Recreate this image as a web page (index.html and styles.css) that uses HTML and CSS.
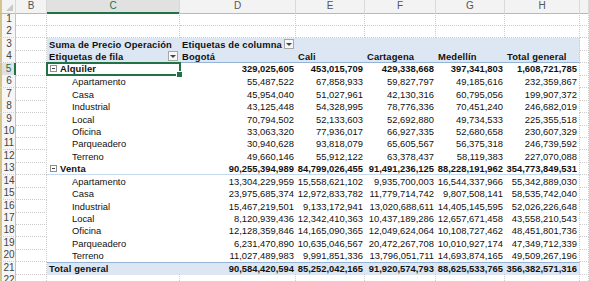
FILE: index.html
```html
<!DOCTYPE html>
<html lang="es">
<head>
    <meta charset="UTF-8">
    <title>Tabla dinámica - Precio Operación</title>
    <link rel="stylesheet" href="styles.css">
</head>
<body>
    <div class="sheet" id="sheet"></div>

    <script>
        // Pivot data: Suma de Precio Operación by tipo / ciudad
        const cities = ['Bogotá', 'Cali', 'Cartagena', 'Medellín', 'Total general'];
        const rows = [
            { kind: 'group', label: 'Alquiler', vals: ['329,025,605', '453,015,709', '429,338,668', '397,341,803', '1,608,721,785'] },
            { kind: 'item', label: 'Apartamento', vals: ['55,487,522', '67,858,933', '59,827,797', '49,185,616', '232,359,867'] },
            { kind: 'item', label: 'Casa', vals: ['45,954,040', '51,027,961', '42,130,316', '60,795,056', '199,907,372'] },
            { kind: 'item', label: 'Industrial', vals: ['43,125,448', '54,328,995', '78,776,336', '70,451,240', '246,682,019'] },
            { kind: 'item', label: 'Local', vals: ['70,794,502', '52,133,603', '52,692,880', '49,734,533', '225,355,518'] },
            { kind: 'item', label: 'Oficina', vals: ['33,063,320', '77,936,017', '66,927,335', '52,680,658', '230,607,329'] },
            { kind: 'item', label: 'Parqueadero', vals: ['30,940,628', '93,818,079', '65,605,567', '56,375,318', '246,739,592'] },
            { kind: 'item', label: 'Terreno', vals: ['49,660,146', '55,912,122', '63,378,437', '58,119,383', '227,070,088'] },
            { kind: 'group', label: 'Venta', vals: ['90,255,394,989', '84,799,026,455', '91,491,236,125', '88,228,191,962', '354,773,849,531'] },
            { kind: 'item', label: 'Apartamento', vals: ['13,304,229,959', '15,558,621,102', '9,935,700,003', '16,544,337,966', '55,342,889,030'] },
            { kind: 'item', label: 'Casa', vals: ['23,975,685,374', '12,972,833,782', '11,779,714,742', '9,807,508,141', '58,535,742,040'] },
            { kind: 'item', label: 'Industrial', vals: ['15,467,219,501', '9,133,172,941', '13,020,688,611', '14,405,145,595', '52,026,226,648'] },
            { kind: 'item', label: 'Local', vals: ['8,120,939,436', '12,342,410,363', '10,437,189,286', '12,657,671,458', '43,558,210,543'] },
            { kind: 'item', label: 'Oficina', vals: ['12,128,359,846', '14,165,090,365', '12,049,624,064', '10,108,727,462', '48,451,801,736'] },
            { kind: 'item', label: 'Parqueadero', vals: ['6,231,470,890', '10,635,046,567', '20,472,267,708', '10,010,927,174', '47,349,712,339'] },
            { kind: 'item', label: 'Terreno', vals: ['11,027,489,983', '9,991,851,336', '13,796,051,711', '14,693,874,165', '49,509,267,196'] },
            { kind: 'total', label: 'Total general', vals: ['90,584,420,594', '85,252,042,165', '91,920,574,793', '88,625,533,765', '356,382,571,316'] }
        ];

        const sheet = document.getElementById('sheet');
        const dropdown = '<span class="dd"></span>';

        function line(num, cells, cls = '') {
            const numCls = num === 5 ? 'num active' : 'num';
            return `<div class="row ${cls}"><div class="${numCls}">${num}</div><div class="c grid"></div>${cells}<div class="c grid"></div></div>`;
        }

        function emptyCells() {
            return '<div class="c grid"></div>'.repeat(6);
        }

        let html = '';

        // Column letters
        html += '<div class="row heads"><div class="corner"></div>';
        ['B', 'C', 'D', 'E', 'F', 'G', 'H', ''].forEach(l => {
            html += `<div class="head${l === 'C' ? ' active' : ''}">${l}</div>`;
        });
        html += '</div>';

        html += line(1, emptyCells());
        html += line(2, emptyCells());

        // Pivot header rows
        html += line(3,
            '<div class="c pv lbl b">Suma de Precio Operación</div>' +
            `<div class="c pv lbl b split">Etiquetas de columna${dropdown}</div>` +
            '<div class="c pv"></div>'.repeat(3) + '<div class="c pv last"></div>',
            'hd');

        html += line(4,
            `<div class="c pv lbl b split">Etiquetas de fila${dropdown}</div>` +
            cities.map((c, i) => `<div class="c pv lbl b${i === 4 ? ' last' : ''}">${c}</div>`).join(''),
            'hd hd-end');

        rows.forEach((r, idx) => {
            const num = idx + 5;
            let label;
            if (r.kind === 'group') {
                label = `<div class="c pv lbl b group-lbl${num === 5 ? ' sel' : ''}"><span class="tog"></span>${r.label}</div>`;
            } else if (r.kind === 'item') {
                label = `<div class="c pv lbl item">${r.label}</div>`;
            } else {
                label = `<div class="c pv lbl b">${r.label}</div>`;
            }
            const vals = r.vals.map((v, i) => `<div class="c pv n${i === 4 ? ' last' : ''}">${v}</div>`).join('');
            html += line(num, label + vals, r.kind === 'item' ? '' : r.kind);
        });

        html += line(22, emptyCells());

        sheet.innerHTML = html;
    </script>
</body>
</html>
```

FILE: styles.css
```css
* {
    margin: 0;
    padding: 0;
    box-sizing: border-box;
}

body {
    background: #ffffff;
    font-family: "Liberation Sans", Arial, sans-serif;
    color: #000000;
}

.sheet {
    width: 589px;
    height: 281px;
    overflow: hidden;
}

.row {
    display: grid;
    grid-template-columns: 16px 31px 133px 116px 69px 71px 69px 75px 9px;
    height: 12.45px;
}

/* column letters */
.row.heads {
    height: 13px;
}

.corner,
.head {
    background: #f3f3f3;
    border-bottom: 1px solid #b9b9b9;
    border-right: 1px solid #d9d9d9;
}

.corner {
    position: relative;
    box-shadow: inset 2px 0 0 #d3c58c;
}

.corner::after {
    content: '';
    position: absolute;
    right: 2px;
    bottom: 2px;
    border-left: 7px solid transparent;
    border-bottom: 7px solid #c9c9c9;
}

.head {
    font-size: 10px;
    color: #555555;
    text-align: center;
    line-height: 12px;
}

.head.active {
    background: #e1e1e1;
    color: #217346;
    border-bottom: 2px solid #217346;
}

/* row numbers */
.num {
    background: #f6f6f6;
    border-right: 1px solid #c3c3c3;
    border-bottom: 1px dotted #d0d0d0;
    box-shadow: inset 2px 0 0 #d3c58c;
    font-size: 10px;
    color: #444444;
    text-align: center;
    padding-left: 3px;
    line-height: 12px;
}

.num.active {
    background: #e1e1e1;
    color: #217346;
    border-right: 2px solid #217346;
}

/* cells */
.c {
    font-size: 9.4px;
    white-space: nowrap;
    display: flex;
    align-items: center;
    color: #111111;
}

.grid {
    border-right: 1px dotted #cccccc;
    border-bottom: 1px dotted #cccccc;
}

.pv {
    background: #ffffff;
}

.pv.last {
    border-right: 1px dotted #cccccc;
}

.lbl {
    padding-left: 2px;
}

.b {
    font-weight: bold;
    letter-spacing: 0.15px;
}

.split {
    justify-content: space-between;
    padding-right: 2px;
}

.item {
    padding-left: 25px;
}

.n {
    justify-content: flex-end;
    padding-right: 2px;
}

.group .n,
.total .n {
    font-weight: bold;
}

/* pivot header band */
.hd .pv {
    background: #dde7f3;
}

.hd-end .pv {
    border-bottom: 1px solid #95b3d7;
}

.group .pv {
    border-bottom: 1px solid #c5d9f1;
}

.total .pv {
    background: #dde7f3;
    border-top: 1px solid #95b3d7;
    font-weight: bold;
}

/* filter dropdown button */
.dd {
    width: 10px;
    height: 10px;
    border: 1px solid #a6a6a6;
    background: #f7f7f7;
    display: flex;
    align-items: center;
    justify-content: center;
}

.dd::after {
    content: '';
    border-left: 3px solid transparent;
    border-right: 3px solid transparent;
    border-top: 3px solid #444444;
}

/* expand / collapse box */
.tog {
    width: 7px;
    height: 7px;
    border: 1px solid #8f8f8f;
    margin: 0 3px 0 1px;
    display: flex;
    align-items: center;
    justify-content: center;
}

.tog::after {
    content: '';
    width: 3px;
    height: 1px;
    background: #444444;
}

/* active cell */
.sel {
    position: relative;
}

.sel::after {
    content: '';
    position: absolute;
    left: -1px;
    top: -1px;
    right: -1px;
    bottom: -1px;
    border: 2px solid #217346;
}

.sel::before {
    content: '';
    position: absolute;
    right: -3px;
    bottom: -3px;
    width: 5px;
    height: 5px;
    background: #217346;
    border: 1px solid #ffffff;
    z-index: 2;
}
```
